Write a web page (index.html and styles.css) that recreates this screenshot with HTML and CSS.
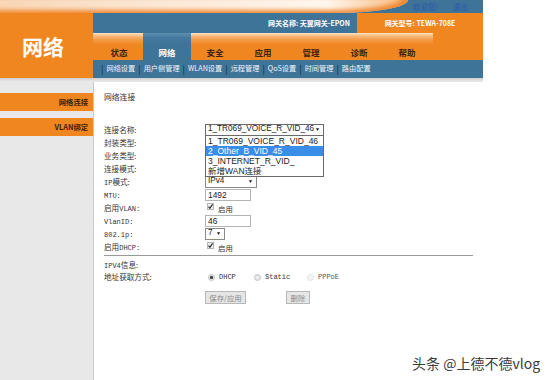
FILE: index.html
```html
<!DOCTYPE html>
<html lang="zh-CN">
<head>
<meta charset="utf-8">
<title>网络</title>
<link rel="stylesheet" href="styles.css">
</head>
<body>
<div class="page">
  <div class="top">
    <div class="swoosh"></div>
    <div class="welcome"><span>欢迎您!</span><span>退出</span></div>
  </div>
  <div class="header">
    <div class="logo">网络</div>
    <div class="hmain">
      <div class="info">
        <div class="gwname">网关名称:&nbsp;天翼网关-EPON</div>
        <div class="gwmodel">网关型号:&nbsp;TEWA-708E</div>
      </div>
      <div class="tabrow">
        <div class="tabset">
          <span class="tab">状态</span>
          <span class="tab active">网络</span>
          <span class="tab">安全</span>
          <span class="tab">应用</span>
          <span class="tab">管理</span>
          <span class="tab">诊断</span>
          <span class="tab">帮助</span>
        </div>
      </div>
      <div class="subnav">
        <span class="sep">|</span><span>网络设置</span>
        <span class="sep">|</span><span>用户侧管理</span>
        <span class="sep">|</span><span>WLAN设置</span>
        <span class="sep">|</span><span>远程管理</span>
        <span class="sep">|</span><span>QoS设置</span>
        <span class="sep">|</span><span>时间管理</span>
        <span class="sep">|</span><span>路由配置</span>
      </div>
    </div>
  </div>
  <div class="shade"></div>
  <div class="body">
    <div class="sidebar">
      <div class="side-item">网络连接</div>
      <div class="side-item">VLAN绑定</div>
    </div>
    <div class="main">
      <div class="title">网络连接</div>
      <div class="form">
        <div class="lbl">连接名称:</div>
        <div class="ctl ctl-first">
          <div class="select sel-name"><span>1_TR069_VOICE_R_VID_46</span><span class="arrow">▼</span></div>
          <div class="dropdown">
            <div class="opt">1_TR069_VOICE_R_VID_46</div>
            <div class="opt hl">2_Other_B_VID_45</div>
            <div class="opt">3_INTERNET_R_VID_</div>
            <div class="opt">新增WAN连接</div>
          </div>
        </div>
        <div class="lbl">封装类型:</div><div class="ctl"></div>
        <div class="lbl">业务类型:</div><div class="ctl"></div>
        <div class="lbl">连接模式:</div><div class="ctl"></div>
        <div class="lbl"><span class="sim">IP</span>模式:</div>
        <div class="ctl"><div class="select sel-ip"><span>IPv4</span><span class="arrow">▼</span></div></div>
        <div class="lbl"><span class="sim">MTU:</span></div>
        <div class="ctl"><div class="input">1492</div></div>
        <div class="lbl">启用<span class="sim">VLAN:</span></div>
        <div class="ctl"><span class="check"><svg width="7" height="7" viewBox="0 0 7 7"><rect x="0.5" y="0.5" width="6" height="6" fill="#f0f0f0" stroke="#b4b4b4"/><path d="M1.5 3.6 L2.9 5.2 L5.6 1.4" fill="none" stroke="#333" stroke-width="1.2"/></svg></span><span class="chk-lbl">启用</span></div>
        <div class="lbl"><span class="sim">VlanID:</span></div>
        <div class="ctl"><div class="input">46</div></div>
        <div class="lbl"><span class="sim">802.1p:</span></div>
        <div class="ctl"><div class="select sel-p"><span>7</span><span class="arrow">▼</span></div></div>
        <div class="lbl">启用<span class="sim">DHCP:</span></div>
        <div class="ctl"><span class="check"><svg width="7" height="7" viewBox="0 0 7 7"><rect x="0.5" y="0.5" width="6" height="6" fill="#f0f0f0" stroke="#b4b4b4"/><path d="M1.5 3.6 L2.9 5.2 L5.6 1.4" fill="none" stroke="#333" stroke-width="1.2"/></svg></span><span class="chk-lbl">启用</span></div>
      </div>
      <div class="rule"></div>
      <div class="form2">
        <div class="lbl"><span class="sim">IPV4</span>信息:</div><div class="ctl"></div>
        <div class="lbl">地址获取方式:</div>
        <div class="ctl radios">
          <span class="ropt r1"><span class="radio on"></span><span class="sim">DHCP</span></span>
          <span class="ropt r2"><span class="radio"></span><span class="sim">Static</span></span>
          <span class="ropt r3"><span class="radio faint"></span><span class="sim faint-t">PPPoE</span></span>
        </div>
      </div>
      <div class="buttons">
        <span class="btn btn-save">保存/应用</span>
        <span class="btn btn-del">删除</span>
      </div>
    </div>
  </div>
</div>
<div class="watermark">头条 @上德不德vlog</div>
</body>
</html>
```
FILE: styles.css
```css
html, body {
  margin: 0;
  padding: 0;
  background: #ffffff;
}
body {
  width: 554px;
  height: 380px;
  overflow: hidden;
  position: relative;
  font-family: "Noto Sans CJK SC", "Liberation Sans", sans-serif;
  color: #333;
}
.page {
  width: 483px;
  height: 380px;
  display: flex;
  flex-direction: column;
}

/* top swoosh strip */
.top {
  height: 13px;
  display: flex;
  background: #3f7499;
}
.swoosh {
  width: 408px;
  height: 13px;
  background: linear-gradient(90deg, #f8d6b6 0%, #fbe6d3 35%, #fdf1e6 65%, #fff7ef 80%, #f7b97c 100%);
  border-bottom-right-radius: 72px 13px;
  box-shadow: inset -5px -3px 4px #f08a35;
}
.welcome {
  flex: 1;
  display: flex;
  justify-content: flex-end;
  align-items: center;
  gap: 15px;
  padding-right: 15px;
  font-size: 7.5px;
  color: #2a55b0;
  line-height: 1;
}

/* header */
.header {
  display: flex;
  height: 65px;
}
.logo {
  width: 93px;
  background: #f0861f;
  color: #fff;
  font-weight: bold;
  font-size: 21px;
  display: flex;
  align-items: center;
  padding-left: 22px;
  box-sizing: border-box;
}
.hmain {
  width: 390px;
  display: flex;
  flex-direction: column;
}
.info {
  height: 20px;
  display: flex;
  font-size: 7px;
  font-weight: bold;
  color: #fff;
  line-height: 20px;
}
.gwname {
  width: 264px;
  background: #3f7499;
  text-align: right;
  padding-right: 7px;
  box-sizing: border-box;
}
.gwmodel {
  flex: 1;
  background: #f0861f;
  text-align: center;
}
.tabrow {
  height: 27px;
  background: #f0861f;
  display: flex;
}
.tabset {
  width: 340px;
  display: flex;
  padding-left: 2px;
  box-sizing: border-box;
  background: linear-gradient(180deg, #fde3c6 0px, #f9b97a 3px, #f39a45 7px, #f0861f 12px);
}
.tab {
  width: 48px;
  display: flex;
  justify-content: center;
  align-items: flex-end;
  padding-bottom: 4px;
  box-sizing: border-box;
  font-size: 8.5px;
  font-weight: bold;
  color: #3b2410;
  line-height: 1;
}
.tab.active {
  background: linear-gradient(180deg, #5d8fb1 0px, #4378a0 5px, #3f7499 12px);
  color: #fff;
}
.subnav {
  height: 18px;
  background: #3f7499;
  display: flex;
  align-items: center;
  padding-left: 7px;
  gap: 2px;
  font-size: 7.2px;
  color: #f2f5f8;
  line-height: 1;
}
.subnav .sep {
  color: #10263d;
  font-size: 9px;
  padding: 0 1px;
}
.shade {
  height: 4px;
  background: linear-gradient(180deg, #cfcfcf, #ececec);
}

/* body */
.body {
  flex: 1;
  display: flex;
}
.sidebar {
  width: 93px;
  background: #e8e8e8;
  padding-top: 11px;
  display: flex;
  flex-direction: column;
  gap: 7px;
}
.side-item {
  height: 18px;
  width: 94px;
  background: #f0861f;
  text-align: right;
  padding-right: 6px;
  box-sizing: border-box;
  font-size: 7.3px;
  font-weight: bold;
  color: #3a1f0a;
  line-height: 18px;
}
.main {
  flex: 1;
  background: #fff;
  border-left: 1px solid #c9c9c9;
  padding: 8px 0 0 10px;
  position: relative;
}
.title {
  font-size: 7.8px;
  line-height: 13px;
  color: #333;
}
.form {
  margin-top: 20px;
  display: grid;
  grid-template-columns: 101px 1fr;
  grid-auto-rows: 13px;
}
.form2 {
  display: grid;
  grid-template-columns: 101px 1fr;
  grid-auto-rows: 12px;
}
.lbl {
  font-size: 7.6px;
  line-height: 13px;
  color: #333;
  white-space: nowrap;
}
.form2 .lbl {
  line-height: 12px;
}
.sim {
  font-family: "Liberation Mono", monospace;
  font-size: 7px;
  color: #333;
}
.ctl {
  display: flex;
  align-items: center;
  position: relative;
}
.select {
  height: 12px;
  border: 1px solid #8a8a8a;
  box-sizing: border-box;
  background: #fff;
  display: flex;
  align-items: center;
  justify-content: space-between;
  padding: 0 3px 0 2px;
  font-family: "Liberation Sans", Arial, sans-serif;
  font-size: 8.2px;
  color: #222;
  line-height: 1;
}
.sel-name { width: 119px; border-color: #6a6a6a; }
.sel-ip { width: 52px; }
.sel-p { width: 20px; }
.arrow {
  font-size: 5px;
  color: #111;
}
.dropdown {
  position: absolute;
  left: 0;
  top: 12px;
  width: 119px;
  border: 1px solid #6a6a6a;
  box-sizing: border-box;
  background: #fff;
  z-index: 2;
}
.opt {
  height: 10px;
  line-height: 10px;
  padding-left: 2px;
  font-family: "Liberation Sans", "Noto Sans CJK SC", sans-serif;
  font-size: 8.5px;
  color: #222;
  white-space: nowrap;
}
.opt.hl {
  background: #3a8ee8;
  color: #fff;
}
.input {
  width: 46px;
  height: 12px;
  border: 1px solid #b4b4b4;
  box-sizing: border-box;
  padding-left: 2px;
  font-family: "Liberation Sans", Arial, sans-serif;
  font-size: 8.4px;
  line-height: 10px;
  color: #222;
}
.check {
  display: flex;
  margin-left: 2px;
  margin-top: -2px;
}
.chk-lbl {
  font-size: 7.4px;
  margin-left: 4px;
  margin-top: 2px;
  color: #333;
}
.rule {
  margin: 2px 0 3px 0;
  width: 369px;
  height: 1px;
  background: #9a9a9a;
}
.radios {
  padding-left: 3px;
}
.ropt {
  display: flex;
  align-items: center;
  gap: 4px;
}
.r1 { width: 46px; }
.r2 { width: 53px; }
.radio {
  width: 7px;
  height: 7px;
  border-radius: 50%;
  box-sizing: border-box;
  border: 1px solid #c2c2c2;
  background: radial-gradient(circle, #f3f3f3 0, #dcdcdc 100%);
}
.radio.on {
  background: radial-gradient(circle, #444 0, #444 1.3px, #e8e8e8 1.8px);
}
.radio.faint {
  border-color: #e2e2e2;
  background: #f4f4f4;
}
.faint-t {
  color: #555;
}
.buttons {
  margin-top: 8px;
  padding-left: 101px;
  display: flex;
  gap: 40px;
}
.btn {
  height: 13px;
  box-sizing: border-box;
  border: 1px solid #b8b8b8;
  background: #e6e6e6;
  color: #8a8a8a;
  font-size: 7.4px;
  line-height: 11px;
  display: flex;
  justify-content: center;
}
.btn-save { width: 41px; }
.btn-del { width: 24px; }

/* watermark overlay */
.watermark {
  position: absolute;
  left: 412px;
  top: 353px;
  font-size: 14px;
  line-height: 20px;
  color: #3a3a3a;
  white-space: nowrap;
  text-shadow: 0 0 2px #fff, 0 0 2px #fff;
}
```
